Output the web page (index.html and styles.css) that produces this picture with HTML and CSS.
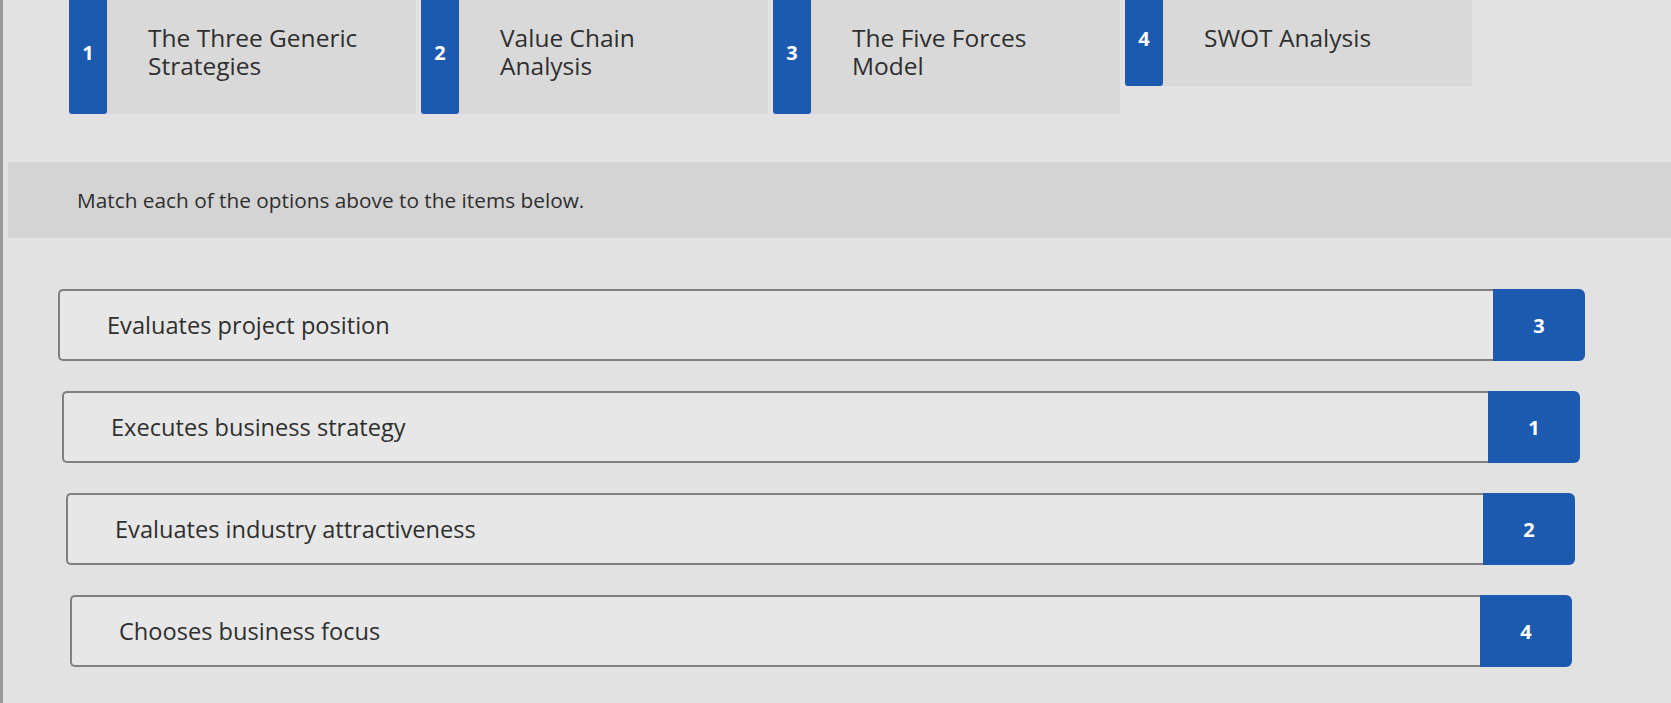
FILE: index.html
```html
<html>
<head>
  <title>Matching</title>
  <link rel="stylesheet" href="styles.css">
</head>
<body>

  <div id="options">
    <div class="option">
      <div class="option-num"><span>1</span></div>
      <div class="option-text">The Three Generic<br>Strategies</div>
    </div>
    <div class="option">
      <div class="option-num"><span>2</span></div>
      <div class="option-text">Value Chain<br>Analysis</div>
    </div>
    <div class="option">
      <div class="option-num"><span>3</span></div>
      <div class="option-text">The Five Forces<br>Model</div>
    </div>
    <div class="option">
      <div class="option-num"><span>4</span></div>
      <div class="option-text">SWOT Analysis</div>
    </div>
  </div>

  <div class="prompt">Match each of the options above to the items below.</div>

  <div id="matchList">
    <div class="match-row">
      <div class="match-label">Evaluates project position</div>
      <div class="match-answer">3</div>
    </div>
    <div class="match-row">
      <div class="match-label">Executes business strategy</div>
      <div class="match-answer">1</div>
    </div>
    <div class="match-row">
      <div class="match-label">Evaluates industry attractiveness</div>
      <div class="match-answer">2</div>
    </div>
    <div class="match-row">
      <div class="match-label">Chooses business focus</div>
      <div class="match-answer">4</div>
    </div>
  </div>

</body>
</html>
```

FILE: styles.css
```css
body {
  font-family: 'Open Sans', 'Liberation Sans', sans-serif;
  margin: 0;
  padding: 0;
  color: #2f2f2f;
  background: #e2e2e2;
  border-left: 3px solid #9a9a9a;
  height: 703px;
  overflow: hidden;
  box-sizing: border-box;
}

#options {
  display: flex;
  align-items: flex-start;
  gap: 5px;
  padding-left: 66px;
}

.option {
  display: flex;
  width: 347px;
  background-color: #d9d9d9;
}

.option-num {
  width: 38px;
  flex-shrink: 0;
  padding: 24px 0 34px;
  display: flex;
  align-items: center;
  justify-content: center;
  background-color: #1c5aaf;
  border-radius: 0 0 3px 3px;
  color: #fff;
  font-weight: bold;
  font-size: 20px;
}

.option-text {
  padding: 24px 0 34px 41px;
  font-size: 24.5px;
  line-height: 28px;
}

.prompt {
  margin: 48px 0 0 5px;
  height: 76px;
  display: flex;
  align-items: center;
  padding-left: 69px;
  background-color: #d4d4d4;
  font-size: 20.8px;
}

#matchList {
  display: flex;
  flex-direction: column;
  gap: 30px;
  margin-top: 51px;
}

.match-row {
  display: flex;
  height: 72px;
}

.match-row:nth-child(1) { margin: 0 86px 0 55px; }
.match-row:nth-child(2) { margin: 0 91px 0 59px; }
.match-row:nth-child(3) { margin: 0 96px 0 63px; }
.match-row:nth-child(4) { margin: 0 99px 0 67px; }

.match-label {
  flex: 1;
  display: flex;
  align-items: center;
  padding-left: 47px;
  background-color: #e7e7e7;
  border: 2px solid #808080;
  border-right: none;
  border-radius: 5px 0 0 5px;
  font-size: 23.6px;
}

.match-answer {
  width: 92px;
  display: flex;
  align-items: center;
  justify-content: center;
  background-color: #1c5aaf;
  border-radius: 0 6px 6px 0;
  color: #fff;
  font-weight: bold;
  font-size: 20px;
}
```
